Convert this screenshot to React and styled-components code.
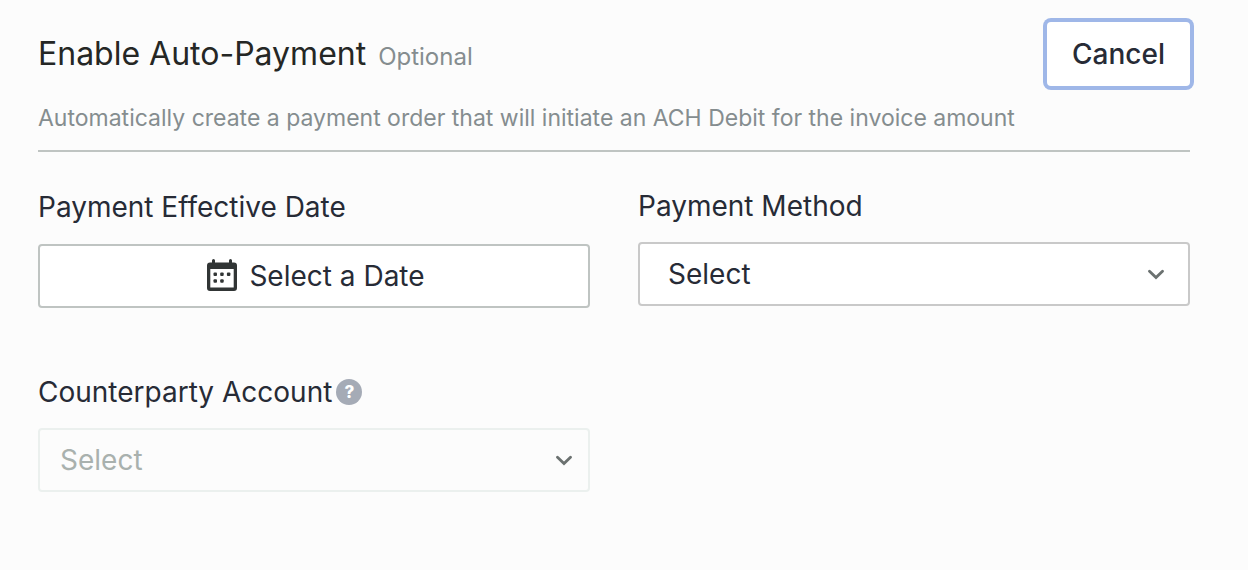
import React from "react";
import styled, { createGlobalStyle } from "styled-components";

const COLORS = {
  page: "#fcfcfc",
  white: "#ffffff",
  title: "#252725",
  text: "#272b36",
  muted: "#858d8f",
  disabled: "#a9b1ae",
  border: "#bfc4c2",
  borderSoft: "#c9c9c9",
  borderDisabled: "#ebf0ee",
  focus: "#9fb7e8",
  icon: "#313535",
  chevron: "#6b7170",
  help: "#a5abb6",
};

const GlobalStyle = createGlobalStyle`
  *, *::before, *::after {
    box-sizing: border-box;
  }

  body {
    margin: 0;
    background: ${COLORS.page};
    color: ${COLORS.text};
    font-family: Inter, "Liberation Sans", sans-serif;
  }

  button, select {
    font: inherit;
    color: inherit;
  }
`;

const CalendarIcon = () => (
  <svg width="30" height="34" viewBox="0 0 30 34" aria-hidden="true">
    <path
      fill={COLORS.icon}
      fillRule="evenodd"
      d="M5 1.5a1.5 1.5 0 0 1 3 0V3.500h14V1.5a1.5 1.5 0 0 1 3 0V3.500h2a3 3 0 0 1 3 3V29a3 3 0 0 1-3 3H3a3 3 0 0 1-3-3V6.500a3 3 0 0 1 3-3h2zM3.300 10v18.500h23.400V10z"
    />
    <g fill={COLORS.icon}>
      <rect x="6.500" y="13.500" width="3.500" height="3.500" rx="1" />
      <rect x="13.200" y="13.500" width="3.500" height="3.500" rx="1" />
      <rect x="19.900" y="13.500" width="3.500" height="3.500" rx="1" />
      <rect x="6.500" y="20.200" width="3.500" height="3.500" rx="1" />
      <rect x="13.200" y="20.200" width="3.500" height="3.500" rx="1" />
    </g>
  </svg>
);

const Chevron = ({ inset }) => (
  <ChevronSvg
    $inset={inset}
    width="16"
    height="12"
    viewBox="0 0 16 12"
    aria-hidden="true"
  >
    <path
      d="M1.500 3.300 8 9.600l6.500-6.300"
      fill="none"
      stroke={COLORS.chevron}
      strokeWidth="2.800"
      strokeLinecap="round"
      strokeLinejoin="miter"
    />
  </ChevronSvg>
);

const SelectField = ({ id, inset, ...props }) => (
  <SelectWrapper>
    <NativeSelect id={id} $inset={inset} {...props}>
      <option>Select</option>
    </NativeSelect>
    <Chevron inset={inset} />
  </SelectWrapper>
);

const App = () => (
  <>
    <GlobalStyle />
    <Panel>
      <Header>
        <TitleRow>
          <Heading>
            <Title>Enable Auto-Payment</Title>
            <Optional>Optional</Optional>
          </Heading>
          <CancelButton type="button">Cancel</CancelButton>
        </TitleRow>
        <Description>
          Automatically create a payment order that will initiate an ACH Debit
          for the invoice amount
        </Description>
      </Header>

      <Fields>
        <Field>
          <Label htmlFor="effective-date" $tall>
            Payment Effective Date
          </Label>
          <DateButton type="button" id="effective-date">
            <CalendarIcon />
            Select a Date
          </DateButton>
        </Field>

        <Field>
          <Label htmlFor="payment-method">Payment Method</Label>
          <SelectField id="payment-method" inset={28} />
        </Field>

        <Field>
          <LabelRow>
            <Label htmlFor="counterparty-account">Counterparty Account</Label>
            <HelpButton type="button" aria-label="About counterparty accounts">
              ?
            </HelpButton>
          </LabelRow>
          <SelectField id="counterparty-account" inset={20} disabled />
        </Field>
      </Fields>
    </Panel>
  </>
);

const Panel = styled.main`
  padding: 22px 58px 78px 38px;
`;

const Header = styled.header`
  padding-bottom: 16px;
  border-bottom: 2px solid ${COLORS.border};
`;

const TitleRow = styled.div`
  display: flex;
  align-items: center;
  justify-content: space-between;
`;

const Heading = styled.div`
  display: flex;
  align-items: baseline;
  gap: 12px;
`;

const Title = styled.h1`
  margin: 0;
  font-size: 32px;
  font-weight: 400;
  line-height: 42px;
  color: ${COLORS.title};
`;

const Optional = styled.span`
  font-size: 24px;
  line-height: 32px;
  color: ${COLORS.muted};
`;

const CancelButton = styled.button`
  height: 64px;
  padding: 0 25px;
  border: none;
  border-radius: 4px;
  background: ${COLORS.white};
  box-shadow: 0 0 0 4px ${COLORS.focus};
  font-size: 28px;
  font-weight: 500;
  cursor: pointer;
`;

const Description = styled.p`
  margin: 16px 0 0;
  font-size: 23px;
  line-height: 32px;
  color: ${COLORS.muted};
`;

const Fields = styled.form`
  display: grid;
  grid-template-columns: 1fr 1fr;
  gap: 66px 48px;
  margin-top: 36px;
`;

const Field = styled.div`
  display: flex;
  flex-direction: column;
  gap: 18px;
`;

const Label = styled.label`
  font-size: 28px;
  line-height: ${(p) => (p.$tall ? 38 : 36)}px;
`;

const LabelRow = styled.div`
  display: flex;
  align-items: center;
  gap: 4px;
`;

const HelpButton = styled.button`
  display: grid;
  place-items: center;
  width: 26px;
  height: 26px;
  padding: 0;
  border: none;
  border-radius: 50%;
  background: ${COLORS.help};
  && {
    color: ${COLORS.white};
    font-size: 17px;
    font-weight: 800;
    line-height: 26px;
  }
`;

const DateButton = styled.button`
  display: flex;
  align-items: center;
  justify-content: center;
  gap: 12px;
  height: 64px;
  padding: 0 20px 0 24px;
  border: 2px solid ${COLORS.border};
  border-radius: 4px;
  background: ${COLORS.white};
  font-size: 28px;
  cursor: pointer;
`;

const SelectWrapper = styled.div`
  position: relative;
`;

const NativeSelect = styled.select`
  appearance: none;
  display: block;
  width: 100%;
  height: 64px;
  padding: 0 56px 0 ${(p) => p.$inset}px;
  border: 2px solid ${COLORS.borderSoft};
  border-radius: 4px;
  background: ${COLORS.white};
  font-size: 28px;

  &:disabled {
    border-color: ${COLORS.borderDisabled};
    background: transparent;
    color: ${COLORS.disabled};
    opacity: 1;
  }
`;

const ChevronSvg = styled.svg`
  position: absolute;
  top: 0;
  bottom: 0;
  right: ${(p) => p.$inset - 2}px;
  margin: auto 0;
  pointer-events: none;
`;

export default App;
